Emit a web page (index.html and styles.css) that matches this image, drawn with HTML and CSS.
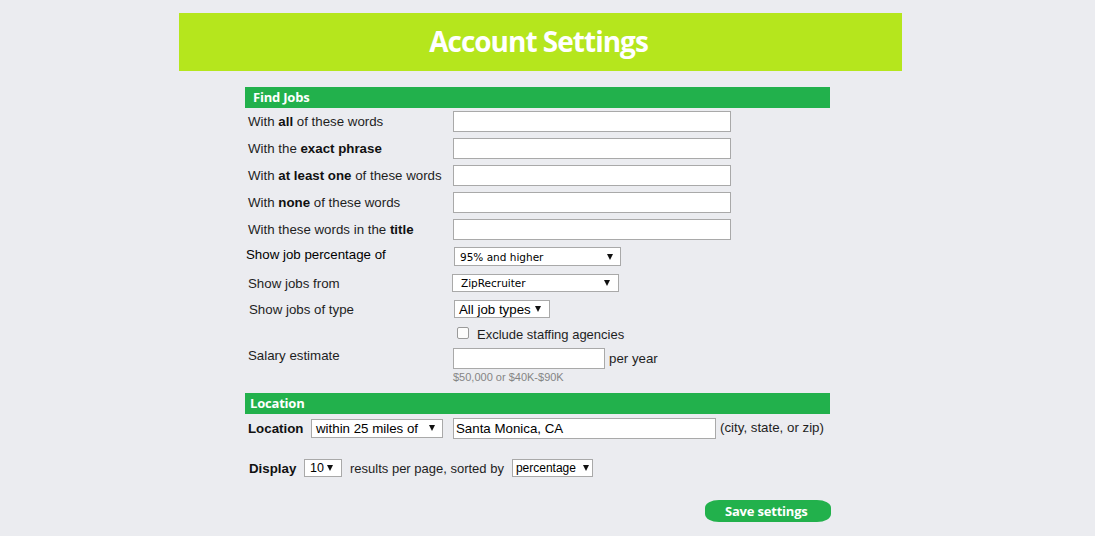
FILE: index.html
```html
<!DOCTYPE html>
<html>
<head>
<meta charset="utf-8">
<title>Account Settings</title>
<link rel="stylesheet" href="styles.css">
</head>
<body>
<div class="page">
  <div class="header"><h1 class="title">Account Settings</h1></div>
  <div class="form">
    <div class="bar bar-find">Find Jobs</div>

    <div class="row row-first">
      <label class="lbl">With <b>all</b> of these words</label>
      <input class="text wide" type="text">
    </div>
    <div class="row">
      <label class="lbl">With the <b>exact phrase</b></label>
      <input class="text wide" type="text">
    </div>
    <div class="row">
      <label class="lbl">With <b>at least one</b> of these words</label>
      <input class="text wide" type="text">
    </div>
    <div class="row">
      <label class="lbl">With <b>none</b> of these words</label>
      <input class="text wide" type="text">
    </div>
    <div class="row">
      <label class="lbl">With these words in the <b>title</b></label>
      <input class="text wide" type="text">
    </div>

    <div class="row2 row-pct">
      <label class="lbl lbl-pct">Show job percentage of</label>
      <div class="select sel-pct"><span>95% and higher</span><i class="arrow"></i></div>
    </div>
    <div class="row2 row-from">
      <label class="lbl lbl-from">Show jobs from</label>
      <div class="select sel-from"><span>ZipRecruiter</span><i class="arrow"></i></div>
    </div>
    <div class="row2 row-type">
      <label class="lbl lbl-type">Show jobs of type</label>
      <div class="select sel-type"><span>All job types</span><i class="arrow"></i></div>
    </div>
    <div class="row2 row-check">
      <input class="check" type="checkbox">
      <span class="check-text">Exclude staffing agencies</span>
    </div>
    <div class="row2 row-salary">
      <label class="lbl lbl-salary">Salary estimate</label>
      <input class="text salary" type="text">
      <span class="after">per year</span>
    </div>
    <div class="hint">$50,000 or $40K-$90K</div>

    <div class="bar bar-loc">Location</div>
    <div class="row2 row-loc">
      <label class="lbl-bold lbl-loc">Location</label>
      <div class="select sel-miles"><span>within 25 miles of</span><i class="arrow"></i></div>
      <input class="text city" type="text" value="Santa Monica, CA">
      <span class="after">(city, state, or zip)</span>
    </div>
    <div class="row2 row-display">
      <label class="lbl-bold lbl-display">Display</label>
      <div class="select sel-num"><span>10</span><i class="arrow"></i></div>
      <span class="mid">results per page, sorted by</span>
      <div class="select sel-sort"><span>percentage</span><i class="arrow"></i></div>
    </div>
    <div class="actions">
      <button class="save" type="button">Save settings</button>
    </div>
  </div>
</div>
</body>
</html>
```

FILE: styles.css
```css
html, body {
  margin: 0;
  padding: 0;
  background: #ebecf0;
}
body {
  font-family: "Liberation Sans", Arial, sans-serif;
  color: #1e1e1e;
}
.page {
  width: 723px;
  margin-left: 179px;
  padding-top: 13px;
}
.header {
  height: 58px;
  background: #b5e61d;
  display: flex;
  align-items: center;
  justify-content: center;
}
.title {
  margin: 0;
  color: #fff;
  font-family: "Open Sans", sans-serif;
  font-weight: 700;
  font-size: 28px;
  letter-spacing: -1px;
  line-height: 1;
  padding-right: 4px;
  position: relative;
  top: -1px;
}
.form {
  width: 585px;
  margin-left: 66px;
  margin-top: 16px;
  padding-bottom: 20px;
}
.bar {
  height: 21px;
  line-height: 20px;
  background: #22b14c;
  color: #fff;
  font-family: "Open Sans", sans-serif;
  font-weight: 700;
  font-size: 13px;
  letter-spacing: -0.2px;
}
.bar-find { padding-left: 8px; }
.bar-loc { padding-left: 5px; margin-top: 9px; }

.row {
  display: flex;
  align-items: center;
  height: 21px;
  margin-top: 6px;
}
.row-first { margin-top: 3px; }
.lbl {
  font-size: 13.3px;
  color: #1e1e1e;
  box-sizing: border-box;
  width: 208px;
  padding-left: 3px;
  white-space: nowrap;
}
.lbl b { color: #111; }
.text {
  box-sizing: border-box;
  border: 1px solid #a9a9a9;
  background: #fff;
  margin: 0;
  padding: 0 2px;
  font-family: "Liberation Sans", Arial, sans-serif;
  font-size: 13.3px;
  color: #000;
  outline: none;
}
.wide { width: 278px; height: 21px; }

.row2 {
  display: flex;
  align-items: center;
}
.select {
  box-sizing: border-box;
  display: flex;
  align-items: center;
  justify-content: space-between;
  border: 1px solid #a9a9a9;
  background: #fff;
  color: #000;
  white-space: nowrap;
}
.arrow {
  width: 0;
  height: 0;
  border-left: 3px solid transparent;
  border-right: 3px solid transparent;
  border-top: 6px solid #111;
}

.row-pct { margin-top: 7px; align-items: flex-start; }
.lbl-pct { width: 209px; padding-left: 1px; color: #000; line-height: 15px; }
.sel-pct {
  width: 167px; height: 19px;
  padding: 0 7px 0 5px;
  font-family: "DejaVu Sans", Verdana, sans-serif;
  font-size: 10.5px;
}

.row-from { margin-top: 8px; }
.lbl-from { width: 207px; padding-left: 3px; }
.sel-from {
  width: 167px; height: 18px;
  padding: 0 8px 0 8px;
  font-family: "DejaVu Sans", Verdana, sans-serif;
  font-size: 10.5px;
}

.row-type { margin-top: 8px; }
.lbl-type { width: 209px; padding-left: 4px; }
.sel-type {
  width: 96px; height: 18px;
  padding: 0 8px 0 4px;
  font-size: 13.3px;
}

.row-check { margin-top: 8px; height: 17px; padding-left: 212px; }
.check {
  -webkit-appearance: none;
  appearance: none;
  box-sizing: border-box;
  width: 12px;
  height: 12px;
  margin: 0;
  border: 1px solid #9a9a9a;
  border-radius: 2px;
  background: #fcfcfc;
  position: relative;
  top: -2px;
}
.check-text {
  margin-left: 8px;
  font-size: 13px;
  color: #1e1e1e;
}

.row-salary { margin-top: 5px; align-items: flex-start; }
.lbl-salary { width: 208px; padding-left: 3px; line-height: 15px; }
.salary { width: 152px; height: 21px; }
.after {
  margin-left: 4px;
  font-size: 13.3px;
  color: #1e1e1e;
  line-height: 21px;
}
.hint {
  margin-top: 2px;
  margin-left: 208px;
  font-size: 11px;
  line-height: 13px;
  color: #858585;
}

.row-loc { margin-top: 4px; height: 20px; }
.lbl-bold {
  font-size: 13.3px;
  font-weight: 700;
  color: #111;
  box-sizing: border-box;
  white-space: nowrap;
}
.lbl-loc { width: 66px; padding-left: 3px; }
.sel-miles {
  width: 132px; height: 19px;
  padding: 0 7px 0 4px;
  font-size: 13.3px;
}
.city { width: 263px; height: 21px; margin-left: 10px; }
.row-loc .after { line-height: 20px; }

.row-display { margin-top: 21px; height: 18px; }
.lbl-display { width: 59px; padding-left: 4px; }
.sel-num {
  width: 38px; height: 18px;
  padding: 0 8px 0 5px;
  font-size: 12.5px;
}
.mid {
  margin-left: 8px;
  margin-right: 8px;
  font-size: 13px;
  color: #1e1e1e;
}
.sel-sort {
  width: 81px; height: 18px;
  padding: 0 3px 0 3px;
  font-size: 12px;
}

.actions {
  margin-top: 23px;
  padding-left: 460px;
}
.save {
  box-sizing: border-box;
  width: 126px;
  height: 22px;
  border: 0;
  border-radius: 14px / 8px;
  background: #22b14c;
  color: #fff;
  font-family: "Open Sans", sans-serif;
  font-weight: 700;
  font-size: 13px;
  letter-spacing: -0.2px;
  text-align: left;
  padding: 0 0 1px 20px;
  margin: 0;
}
```
